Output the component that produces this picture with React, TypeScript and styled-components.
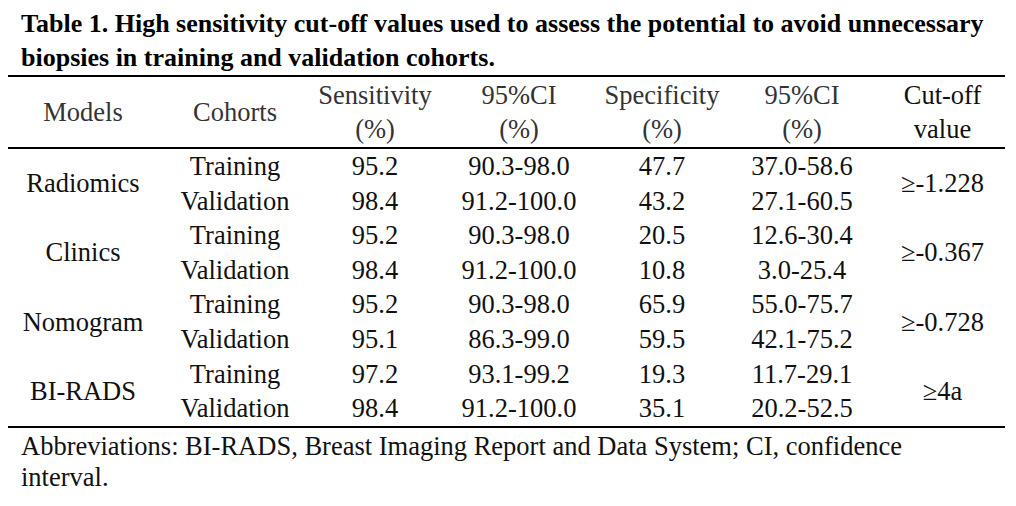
import React from "react";
import styled, { createGlobalStyle } from "styled-components";

type Row = {
  cohort: string;
  sens: string;
  sensCi: string;
  spec: string;
  specCi: string;
};

type Group = {
  model: string;
  cutoff: string;
  rows: Row[];
};

const groups: Group[] = [
  {
    model: "Radiomics",
    cutoff: "≥-1.228",
    rows: [
      { cohort: "Training", sens: "95.2", sensCi: "90.3-98.0", spec: "47.7", specCi: "37.0-58.6" },
      { cohort: "Validation", sens: "98.4", sensCi: "91.2-100.0", spec: "43.2", specCi: "27.1-60.5" },
    ],
  },
  {
    model: "Clinics",
    cutoff: "≥-0.367",
    rows: [
      { cohort: "Training", sens: "95.2", sensCi: "90.3-98.0", spec: "20.5", specCi: "12.6-30.4" },
      { cohort: "Validation", sens: "98.4", sensCi: "91.2-100.0", spec: "10.8", specCi: "3.0-25.4" },
    ],
  },
  {
    model: "Nomogram",
    cutoff: "≥-0.728",
    rows: [
      { cohort: "Training", sens: "95.2", sensCi: "90.3-98.0", spec: "65.9", specCi: "55.0-75.7" },
      { cohort: "Validation", sens: "95.1", sensCi: "86.3-99.0", spec: "59.5", specCi: "42.1-75.2" },
    ],
  },
  {
    model: "BI-RADS",
    cutoff: "≥4a",
    rows: [
      { cohort: "Training", sens: "97.2", sensCi: "93.1-99.2", spec: "19.3", specCi: "11.7-29.1" },
      { cohort: "Validation", sens: "98.4", sensCi: "91.2-100.0", spec: "35.1", specCi: "20.2-52.5" },
    ],
  },
];

const columnWidths = [150, 154, 126, 162, 124, 156, 125];

const App = (): JSX.Element => {
  return (
    <>
      <GlobalStyle />
      <Page>
        <Caption>
          Table 1. High sensitivity cut-off values used to assess the potential to avoid unnecessary biopsies
          in training and validation cohorts.
        </Caption>
        <Table>
          <colgroup>
            {columnWidths.map((w, i) => (
              <col key={i} style={{ width: w }} />
            ))}
          </colgroup>
          <thead>
            <tr>
              <HeadCell>Models</HeadCell>
              <HeadCell>Cohorts</HeadCell>
              <HeadCell>
                Sensitivity
                <br />
                (%)
              </HeadCell>
              <HeadCell>
                95%CI
                <br />
                (%)
              </HeadCell>
              <HeadCell>
                Specificity
                <br />
                (%)
              </HeadCell>
              <HeadCell>
                95%CI
                <br />
                (%)
              </HeadCell>
              <HeadCell $dark>
                Cut-off
                <br />
                value
              </HeadCell>
            </tr>
          </thead>
          <tbody>
            {groups.map((group) =>
              group.rows.map((row, index) => (
                <tr key={group.model + row.cohort}>
                  {index === 0 && <SpanCell rowSpan={2}>{group.model}</SpanCell>}
                  <Cell>{row.cohort}</Cell>
                  <Cell>{row.sens}</Cell>
                  <Cell>{row.sensCi}</Cell>
                  <Cell>{row.spec}</Cell>
                  <Cell>{row.specCi}</Cell>
                  {index === 0 && <SpanCell rowSpan={2}>{group.cutoff}</SpanCell>}
                </tr>
              ))
            )}
          </tbody>
        </Table>
        <Note>Abbreviations: BI-RADS, Breast Imaging Report and Data System; CI, confidence interval.</Note>
      </Page>
    </>
  );
};

const GlobalStyle = createGlobalStyle`
  html, body {
    margin: 0;
    padding: 0;
    background: #ffffff;
  }
  body {
    font-family: "Liberation Serif", "Times New Roman", serif;
    color: #111111;
  }
`;

const Page = styled.div`
  width: 1016px;
  padding: 7px 0 0 8px;
  box-sizing: border-box;
`;

const Caption = styled.p`
  margin: 0;
  padding: 0 14px 0 13px;
  font-size: 26px;
  line-height: 34px;
  font-weight: bold;
  color: #000000;
`;

const Table = styled.table`
  width: 997px;
  border-collapse: collapse;
  table-layout: fixed;
  border-top: 2px solid #000000;
  border-bottom: 2px solid #000000;
  font-size: 26.5px;
`;

const HeadCell = styled.th<{ $dark?: boolean }>`
  font-weight: normal;
  text-align: center;
  vertical-align: middle;
  padding: 1px 0 1px;
  line-height: 34px;
  white-space: nowrap;
  color: ${({ $dark }) => ($dark ? "#111111" : "#333333")};
  border-bottom: 2px solid #000000;
`;

const Cell = styled.td`
  text-align: center;
  padding: 0;
  height: 34.6px;
  line-height: 34.6px;
  white-space: nowrap;
`;

const SpanCell = styled(Cell)`
  vertical-align: middle;
`;

const Note = styled.p`
  margin: 0;
  padding: 3px 60px 0 13px;
  font-size: 26.5px;
  line-height: 31px;
  color: #111111;
`;

export default App;
